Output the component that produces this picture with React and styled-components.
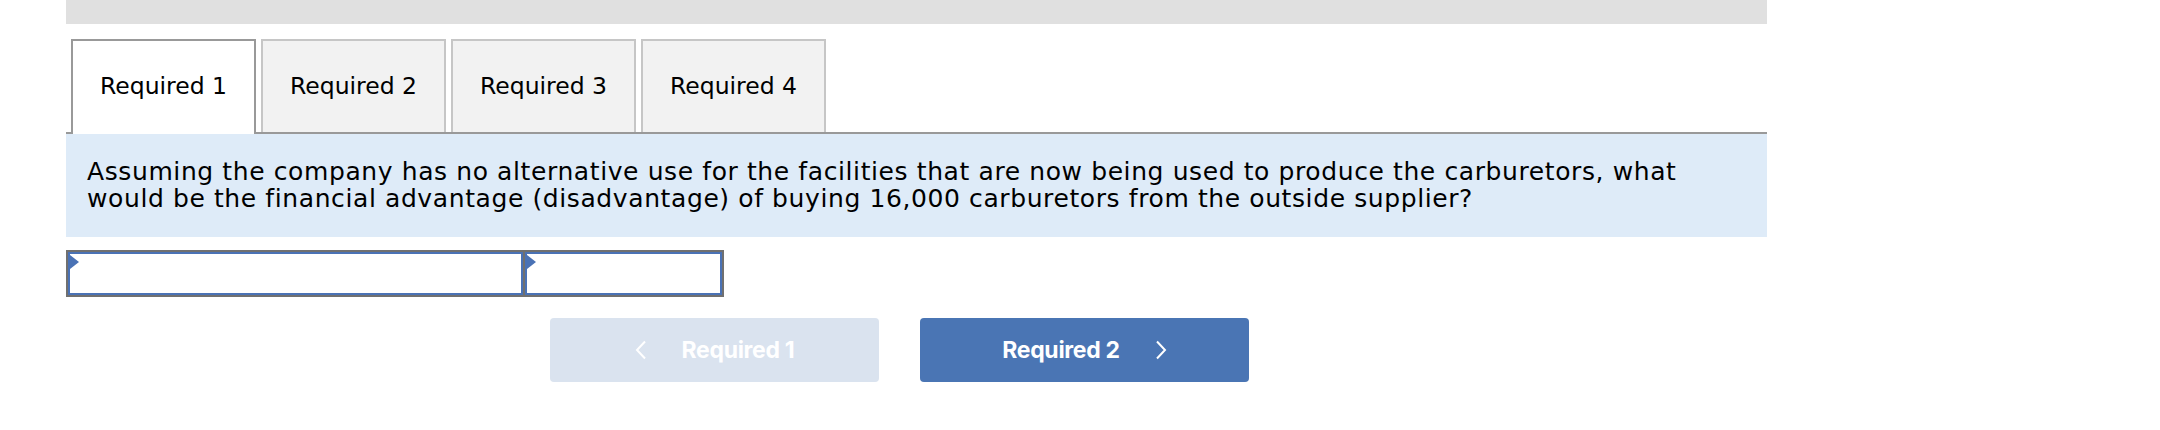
import styled, { createGlobalStyle } from "styled-components";

const GlobalStyle = createGlobalStyle`
  body {
    margin: 0;
    background: #fff;
    font-family: "DejaVu Sans", Verdana, sans-serif;
    color: #000;
  }
`;

const tabs = ["Required 1", "Required 2", "Required 3", "Required 4"];

const ChevronLeft = () => (
  <svg width="12" height="20" viewBox="0 0 12 20">
    <polyline points="10,1.5 2,10 10,18.5" fill="none" stroke="#fff" strokeWidth="2" />
  </svg>
);

const ChevronRight = () => (
  <svg width="12" height="20" viewBox="0 0 12 20">
    <polyline points="2,1.5 10,10 2,18.5" fill="none" stroke="#fff" strokeWidth="2" />
  </svg>
);

const App = () => {
  return (
    <Page>
      <GlobalStyle />
      <TopBar />
      <TabStrip>
        {tabs.map((t, i) => (
          <Tab key={t} $active={i === 0}>
            {t}
          </Tab>
        ))}
      </TabStrip>
      <Question>
        Assuming the company has no alternative use for the facilities that are
        now being used to produce the carburetors, what would be the financial
        advantage (disadvantage) of buying 16,000 carburetors from the outside
        supplier?
      </Question>
      <InputTable>
        <InputCell $width={455}>
          <Marker />
        </InputCell>
        <InputCell $width={197}>
          <Marker />
        </InputCell>
      </InputTable>
      <NavRow>
        <NavButton $disabled>
          <ChevronLeft />
          <span>Required 1</span>
        </NavButton>
        <NavButton>
          <span>Required 2</span>
          <ChevronRight />
        </NavButton>
      </NavRow>
    </Page>
  );
};

const Page = styled.div`
  width: 1701px;
  margin-left: 66px;
`;

const TopBar = styled.div`
  height: 24px;
  background: #e0e0e0;
`;

const TabStrip = styled.div`
  display: flex;
  gap: 5px;
  margin-top: 15px;
  padding-left: 5px;
  border-bottom: 2px solid #999;
`;

const Tab = styled.div`
  box-sizing: border-box;
  width: 185px;
  height: ${(p) => (p.$active ? "95px" : "93px")};
  margin-bottom: ${(p) => (p.$active ? "-2px" : "0")};
  padding-bottom: ${(p) => (p.$active ? "3px" : "0")};
  display: flex;
  align-items: center;
  justify-content: center;
  font-size: 23.5px;
  line-height: 27px;
  background: ${(p) => (p.$active ? "#fff" : "#f2f2f2")};
  border: 2px solid ${(p) => (p.$active ? "#999" : "#c6c6c6")};
  border-bottom: none;
`;

const Question = styled.div`
  background: #deebf8;
  padding: 24px 40px 25px 21px;
  font-size: 25px;
  line-height: 27px;
  letter-spacing: 0.6px;
`;

const InputTable = styled.div`
  display: flex;
  gap: 2px;
  width: fit-content;
  margin-top: 13px;
  border: 2px solid #707070;
  background: #707070;
`;

const InputCell = styled.div`
  position: relative;
  box-sizing: border-box;
  width: ${(p) => p.$width}px;
  height: 43px;
  background: #fff;
  border: 2px solid #4a72b5;
`;

const Marker = styled.span`
  position: absolute;
  top: 1px;
  left: 0;
  width: 0;
  height: 0;
  border-top: 7px solid transparent;
  border-bottom: 7px solid transparent;
  border-left: 9px solid #4a72b5;
`;

const NavRow = styled.div`
  display: flex;
  gap: 41px;
  margin-top: 21px;
  padding-left: 484px;
`;

const NavButton = styled.div`
  box-sizing: border-box;
  width: 329px;
  height: 64px;
  border-radius: 4px;
  display: flex;
  align-items: center;
  justify-content: center;
  gap: 35px;
  background: ${(p) => (p.$disabled ? "#dae3ef" : "#4a75b4")};
  color: #fff;
  font-family: Inter, "Open Sans", sans-serif;
  font-weight: 700;
  font-size: 23px;
  letter-spacing: -0.3px;
`;

export default App;
